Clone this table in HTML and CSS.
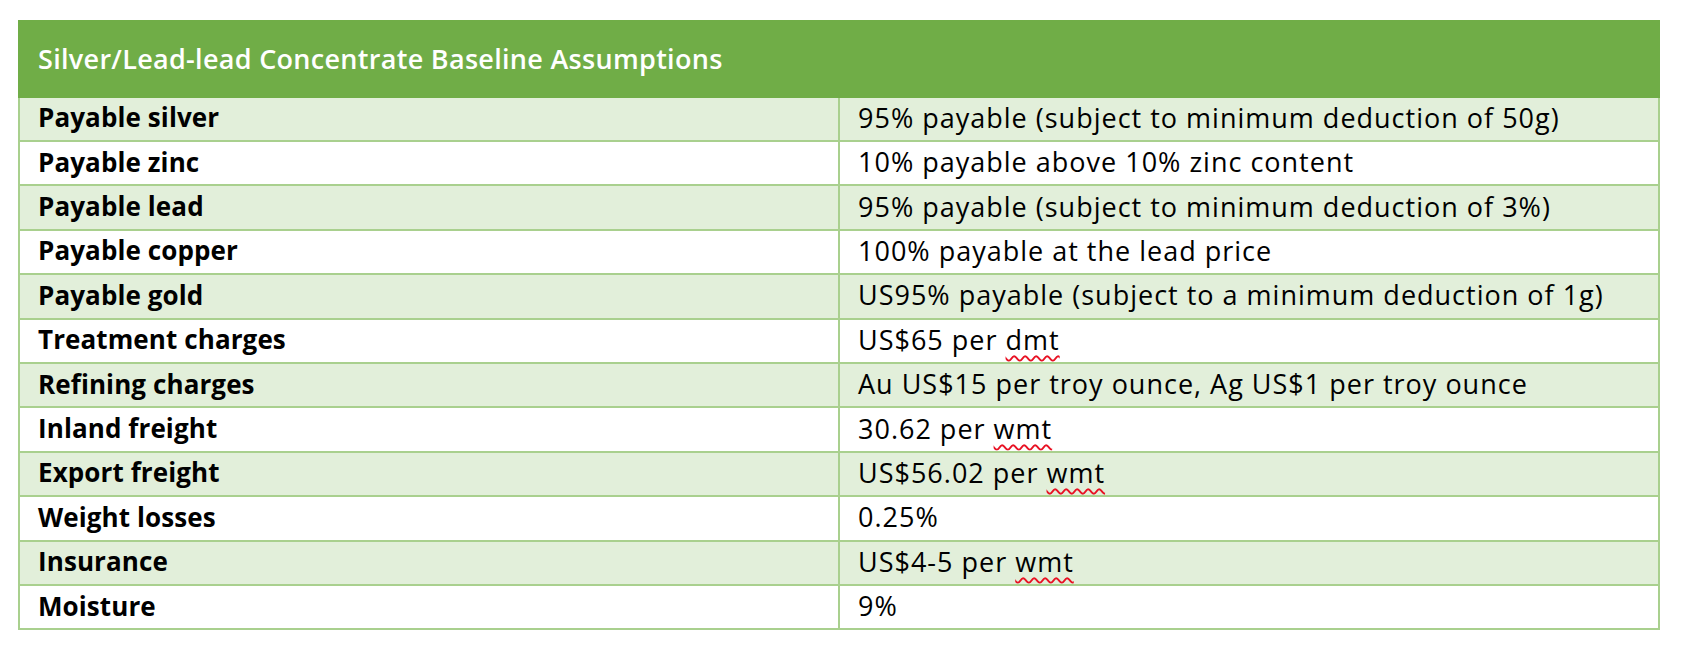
FILE: index.html
```html
<!DOCTYPE html>
<html>
<head>
<meta charset="utf-8">
<link rel="stylesheet" href="styles.css">
</head>
<body>
<table class="sheet">
  <thead>
    <tr><th class="title" colspan="2">Silver/Lead-lead Concentrate Baseline Assumptions</th></tr>
  </thead>
  <tbody>
    <tr class="alt"><td class="label">Payable silver</td><td class="value">95% payable (subject to minimum deduction of 50g)</td></tr>
    <tr><td class="label">Payable zinc</td><td class="value">10% payable above 10% zinc content</td></tr>
    <tr class="alt"><td class="label">Payable lead</td><td class="value">95% payable (subject to minimum deduction of 3%)</td></tr>
    <tr><td class="label">Payable copper</td><td class="value">100% payable at the lead price</td></tr>
    <tr class="alt"><td class="label">Payable gold</td><td class="value">US95% payable (subject to a minimum deduction of 1g)</td></tr>
    <tr><td class="label">Treatment charges</td><td class="value">US$65 per <span class="spell">dmt</span></td></tr>
    <tr class="alt"><td class="label">Refining charges</td><td class="value">Au US$15 per troy ounce, Ag US$1 per troy ounce</td></tr>
    <tr><td class="label">Inland freight</td><td class="value">30.62 per <span class="spell">wmt</span></td></tr>
    <tr class="alt"><td class="label">Export freight</td><td class="value">US$56.02 per <span class="spell">wmt</span></td></tr>
    <tr><td class="label">Weight losses</td><td class="value">0.25%</td></tr>
    <tr class="alt"><td class="label">Insurance</td><td class="value">US$4-5 per <span class="spell">wmt</span></td></tr>
    <tr><td class="label">Moisture</td><td class="value">9%</td></tr>
  </tbody>
</table>
</body>
</html>
```

FILE: styles.css
```css
html, body {
  margin: 0;
  padding: 0;
  background: #ffffff;
}

body {
  padding: 20px 22px 0 18px;
  font-family: "Open Sans", "Noto Sans", sans-serif;
  color: #000000;
}

.sheet {
  width: 1642px;
  border-collapse: collapse;
  table-layout: fixed;
}

.sheet th,
.sheet td {
  border: 2px solid #a9d08e;
  padding: 0 18px;
  text-align: left;
  white-space: nowrap;
}

.title {
  background: #70ad47;
  border-color: #70ad47 !important;
  color: #ffffff;
  font-weight: 600;
  font-size: 27px;
  height: 73.6px;
  letter-spacing: 0.3px;
}

.sheet td {
  height: 39.4px;
  padding-bottom: 3px;
}

.label {
  width: 784px;
  font-weight: 700;
  font-size: 26px;
  letter-spacing: 0.1px;
}

.value {
  font-weight: 400;
  font-size: 27px;
  letter-spacing: 1px;
}

.alt td {
  background: #e2efda;
}

.spell {
  text-decoration: underline wavy #e81123;
  text-decoration-thickness: 1.5px;
  text-underline-offset: 5px;
}
```
